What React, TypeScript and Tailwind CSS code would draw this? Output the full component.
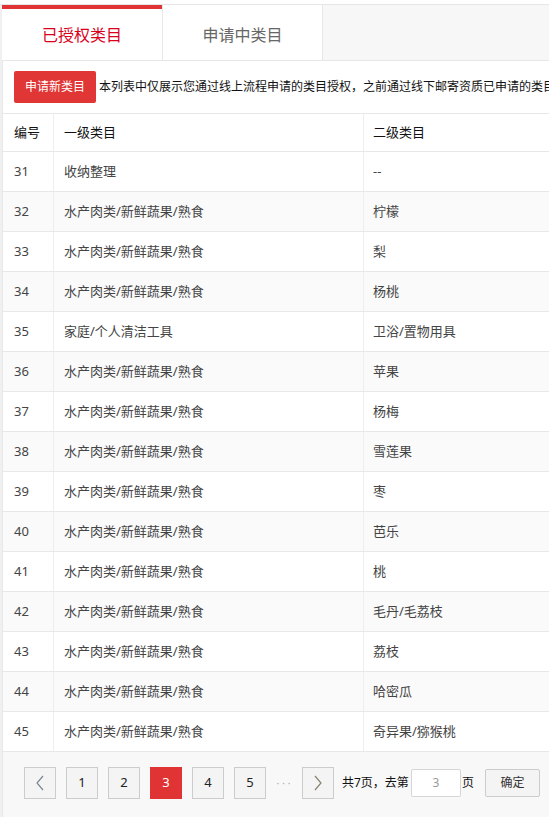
import React from "react";

const rows: [number, string, string][] = [
  [31, "收纳整理", "--"],
  [32, "水产肉类/新鲜蔬果/熟食", "柠檬"],
  [33, "水产肉类/新鲜蔬果/熟食", "梨"],
  [34, "水产肉类/新鲜蔬果/熟食", "杨桃"],
  [35, "家庭/个人清洁工具", "卫浴/置物用具"],
  [36, "水产肉类/新鲜蔬果/熟食", "苹果"],
  [37, "水产肉类/新鲜蔬果/熟食", "杨梅"],
  [38, "水产肉类/新鲜蔬果/熟食", "雪莲果"],
  [39, "水产肉类/新鲜蔬果/熟食", "枣"],
  [40, "水产肉类/新鲜蔬果/熟食", "芭乐"],
  [41, "水产肉类/新鲜蔬果/熟食", "桃"],
  [42, "水产肉类/新鲜蔬果/熟食", "毛丹/毛荔枝"],
  [43, "水产肉类/新鲜蔬果/熟食", "荔枝"],
  [44, "水产肉类/新鲜蔬果/熟食", "哈密瓜"],
  [45, "水产肉类/新鲜蔬果/熟食", "奇异果/猕猴桃"],
];

function PageBtn({ children, active }: { children: React.ReactNode; active?: boolean }) {
  return (
    <div
      className={
        active
          ? "w-[32px] h-[32px] flex items-center justify-center bg-[#e03333] text-white text-[13px]"
          : "w-[32px] h-[32px] flex items-center justify-center bg-[#f4f4f4] border border-[#cccccc] text-[#222] text-[13px]"
      }
    >
      {children}
    </div>
  );
}

export default function App() {
  return (
    <div
      className="w-[549px] h-[817px] overflow-hidden bg-white"
      style={{ fontFamily: '"Noto Sans", "Noto Sans CJK SC", sans-serif' }}
    >
      <div className="h-[4px] bg-white" />
      <div className="border-t border-[#e6e6e6] bg-[#f0f0f0] pl-[2px] h-[813px]">
        {/* Tabs */}
        <div className="flex h-[56px] bg-[#f7f7f7] border-b border-[#e6e6e6]">
          <div className="w-[160px] bg-white border-t-4 border-[#e03333] flex items-center justify-center text-[16px] text-[#d9001b] leading-none">
            已授权类目
          </div>
          <div className="w-[161px] bg-white border-l border-r border-[#e8e8e8] flex items-center justify-center text-[16px] text-[#666] leading-none pt-[4px]">
            申请中类目
          </div>
        </div>

        <div className="bg-white border-l border-[#e8e8e8] h-[756px] flex flex-col overflow-hidden">
          {/* Action row */}
          <div className="flex items-center h-[52px] pl-[11px] gap-[3px] whitespace-nowrap">
            <div className="shrink-0 h-[32px] w-[82px] rounded-[2px] bg-[#e03636] text-white text-[12px] flex items-center justify-center">
              申请新类目
            </div>
            <div className="text-[12px] text-[#111] leading-none">
              本列表中仅展示您通过线上流程申请的类目授权，之前通过线下邮寄资质已申请的类目
            </div>
          </div>

          {/* Table */}
          <div className="border-t border-[#e8e8e8] text-[13px] w-[700px]">
            <div className="flex h-[38px] border-b border-[#e8e8e8] text-[#111]">
              <div className="w-[51px] shrink-0 border-r border-[#eeeeee] pl-[11px] flex items-center">编号</div>
              <div className="w-[310px] shrink-0 border-r border-[#eeeeee] pl-[10px] flex items-center">一级类目</div>
              <div className="flex-1 pl-[9px] flex items-center">二级类目</div>
            </div>
            {rows.map(([n, a, b], i) => (
              <div
                key={n}
                className={
                  i % 2 === 1
                    ? "flex h-[40px] border-b border-[#e8e8e8] bg-[#fafafa] text-[#444]"
                    : "flex h-[40px] border-b border-[#e8e8e8] bg-white text-[#444]"
                }
              >
                <div className="w-[51px] shrink-0 border-r border-[#eeeeee] pl-[11px] flex items-center">{n}</div>
                <div className="w-[310px] shrink-0 border-r border-[#eeeeee] pl-[10px] flex items-center">{a}</div>
                <div className="flex-1 pl-[9px] flex items-center">{b}</div>
              </div>
            ))}
          </div>

          {/* Pagination */}
          <div className="flex-1 bg-[#f8f8f8] flex items-start pt-[15px] pl-[21px] whitespace-nowrap">
            <div className="flex items-center h-[32px]">
              <PageBtn>
                <svg width="10" height="16" viewBox="0 0 10 16" fill="none">
                  <path d="M8 1L2 8l6 7" stroke="#7b8794" strokeWidth="1.2" />
                </svg>
              </PageBtn>
              <div className="w-[10px]" />
              <PageBtn>1</PageBtn>
              <div className="w-[10px]" />
              <PageBtn>2</PageBtn>
              <div className="w-[10px]" />
              <PageBtn active>3</PageBtn>
              <div className="w-[10px]" />
              <PageBtn>4</PageBtn>
              <div className="w-[10px]" />
              <PageBtn>5</PageBtn>
              <div className="w-[36px] flex items-center justify-center text-[#aaa] text-[10px] tracking-[3px] pl-[2px]">
                ···
              </div>
              <PageBtn>
                <svg width="10" height="16" viewBox="0 0 10 16" fill="none">
                  <path d="M2 1l6 7-6 7" stroke="#8a8070" strokeWidth="1.2" />
                </svg>
              </PageBtn>
              <div className="ml-[8px] text-[12px] text-[#111]">共7页，去第</div>
              <div className="ml-[2px] w-[50px] h-[28px] bg-white border border-[#d6d6d6] rounded-[2px] flex items-center justify-center text-[12px] text-[#999]">
                3
              </div>
              <div className="ml-[1px] text-[12px] text-[#111]">页</div>
              <div className="ml-[11px] w-[55px] h-[28px] bg-[#f4f4f4] border border-[#cccccc] rounded-[2px] flex items-center justify-center text-[12px] text-[#333]">
                确定
              </div>
            </div>
          </div>
        </div>
      </div>
    </div>
  );
}
